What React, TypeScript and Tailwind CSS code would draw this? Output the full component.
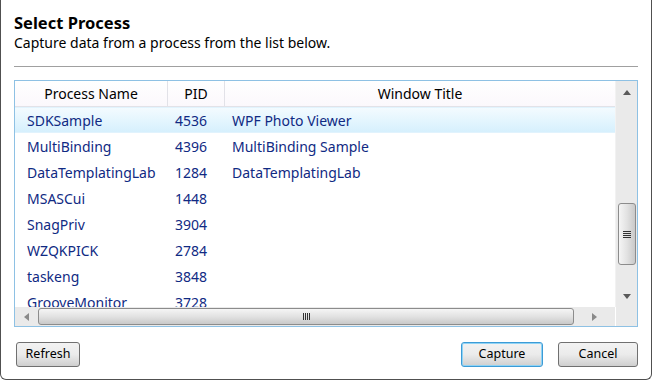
import React from 'react';

interface ProcessRow {
  name: string;
  pid: string;
  title: string;
}

const rows: ProcessRow[] = [
  { name: 'SDKSample', pid: '4536', title: 'WPF Photo Viewer' },
  { name: 'MultiBinding', pid: '4396', title: 'MultiBinding Sample' },
  { name: 'DataTemplatingLab', pid: '1284', title: 'DataTemplatingLab' },
  { name: 'MSASCui', pid: '1448', title: '' },
  { name: 'SnagPriv', pid: '3904', title: '' },
  { name: 'WZQKPICK', pid: '2784', title: '' },
  { name: 'taskeng', pid: '3848', title: '' },
  { name: 'GrooveMonitor', pid: '3728', title: '' },
];

function AeroButton({ label, focused }: { label: string; focused?: boolean }) {
  return (
    <button
      className={
        'h-[25px] rounded-[3px] border text-[12.5px] text-black bg-gradient-to-b from-[#f2f2f2] via-[#ebebeb] to-[#cfcfcf] ' +
        (focused ? 'border-[#3c9bd6] shadow-[inset_0_0_0_1px_#8fd3f5]' : 'border-[#707070]')
      }
    >
      {label}
    </button>
  );
}

export default function App() {
  return (
    <div
      className="w-[653px] h-[381px] bg-white overflow-hidden"
      style={{ fontFamily: '"Noto Sans", "Open Sans", sans-serif' }}
    >
      <div className="w-[652px] h-[380px] border-x border-b border-[#505050] rounded-b-[6px] px-[13px] flex flex-col">
        {/* Header */}
        <div className="pt-[13px]">
          <div className="text-[16.5px] font-bold text-black leading-[20px]">Select Process</div>
          <div className="text-[14px] text-black leading-[19px]">Capture data from a process from the list below.</div>
        </div>
        <div className="mt-[14px] h-px bg-[#a0a0a0]" />

        {/* List view */}
        <div className="mt-[13px] h-[247px] border border-[#8ec1e4] flex flex-col">
          <div className="flex flex-1 min-h-0">
            <div className="flex-1 min-w-0 flex flex-col overflow-hidden">
              {/* Column headers */}
              <div className="flex h-[26px] text-[14px] text-black bg-gradient-to-b from-white to-[#fbf8fc] border-b border-[#e2e2e8] shrink-0">
                <div className="w-[153px] flex items-center justify-center border-r border-[#e2e2e8]">Process Name</div>
                <div className="w-[57px] flex items-center justify-center border-r border-[#e2e2e8]">PID</div>
                <div className="flex-1 flex items-center justify-center">Window Title</div>
              </div>
              {/* Rows */}
              <div className="flex-1 overflow-hidden">
                {rows.map((r, i) => (
                  <div
                    key={r.name}
                    className={
                      'flex h-[26px] items-center text-[14px] text-[#102a83] ' +
                      (i === 0 ? 'bg-gradient-to-b from-[#f3fbff] to-[#d6f0fd] border-y border-[#e1f3fd]' : '')
                    }
                  >
                    <div className="w-[153px] pl-[12px] whitespace-nowrap">{r.name}</div>
                    <div className="w-[57px] pl-[7px]">{r.pid}</div>
                    <div className="flex-1 pl-[7px] whitespace-nowrap">{r.title}</div>
                  </div>
                ))}
              </div>
            </div>
            {/* Vertical scrollbar */}
            <div className="w-[22px] bg-[#eaeaea] border-l border-[#f2f2f2] flex flex-col items-center">
              <div className="h-[22px] flex items-center justify-center">
                <svg width="8" height="5" viewBox="0 0 8 5">
                  <path d="M4 0 L8 5 L0 5 Z" fill="#5a5a5a" />
                </svg>
              </div>
              <div className="flex-1" />
              <div className="w-[18px] h-[62px] rounded-[3px] border border-[#8c8c8c] bg-gradient-to-r from-[#f5f5f5] via-[#e2e2e2] to-[#c9c9c9] flex flex-col items-center justify-center gap-[1px]">
                <div className="w-[8px] h-px bg-[#333]" />
                <div className="w-[8px] h-px bg-[#333]" />
                <div className="w-[8px] h-px bg-[#333]" />
                <div className="w-[8px] h-px bg-[#333]" />
              </div>
              <div className="h-[20px]" />
              <div className="h-[22px] flex items-center justify-center">
                <svg width="8" height="5" viewBox="0 0 8 5">
                  <path d="M0 0 L8 0 L4 5 Z" fill="#5a5a5a" />
                </svg>
              </div>
            </div>
          </div>
          {/* Horizontal scrollbar */}
          <div className="h-[19px] flex bg-[#eaeaea] shrink-0">
            <div className="flex-1 flex items-center">
              <div className="w-[23px] flex items-center justify-center">
                <svg width="5" height="8" viewBox="0 0 5 8">
                  <path d="M5 0 L5 8 L0 4 Z" fill="#8a8a8a" />
                </svg>
              </div>
              <div className="w-[536px] h-[17px] rounded-[3px] border border-[#8c8c8c] bg-gradient-to-b from-[#f5f5f5] via-[#e2e2e2] to-[#c9c9c9] flex items-center justify-center gap-[1px]">
                <div className="w-px h-[7px] bg-[#333]" />
                <div className="w-px h-[7px] bg-[#333]" />
                <div className="w-px h-[7px] bg-[#333]" />
                <div className="w-px h-[7px] bg-[#333]" />
              </div>
              <div className="flex-1 flex items-center justify-center">
                <svg width="5" height="8" viewBox="0 0 5 8">
                  <path d="M0 0 L5 4 L0 8 Z" fill="#8a8a8a" />
                </svg>
              </div>
            </div>
            <div className="w-[22px] border-l border-white bg-[#eaeaea]" />
          </div>
        </div>

        {/* Buttons */}
        <div className="mt-[15px] flex items-center">
          <div className="pl-[2px] w-[66px] flex">
            <div className="w-[64px] flex flex-col"><AeroButton label="Refresh" /></div>
          </div>
          <div className="flex-1" />
          <div className="w-[82px] flex flex-col"><AeroButton label="Capture" focused /></div>
          <div className="w-[15px]" />
          <div className="w-[80px] flex flex-col"><AeroButton label="Cancel" /></div>
        </div>
      </div>
    </div>
  );
}
